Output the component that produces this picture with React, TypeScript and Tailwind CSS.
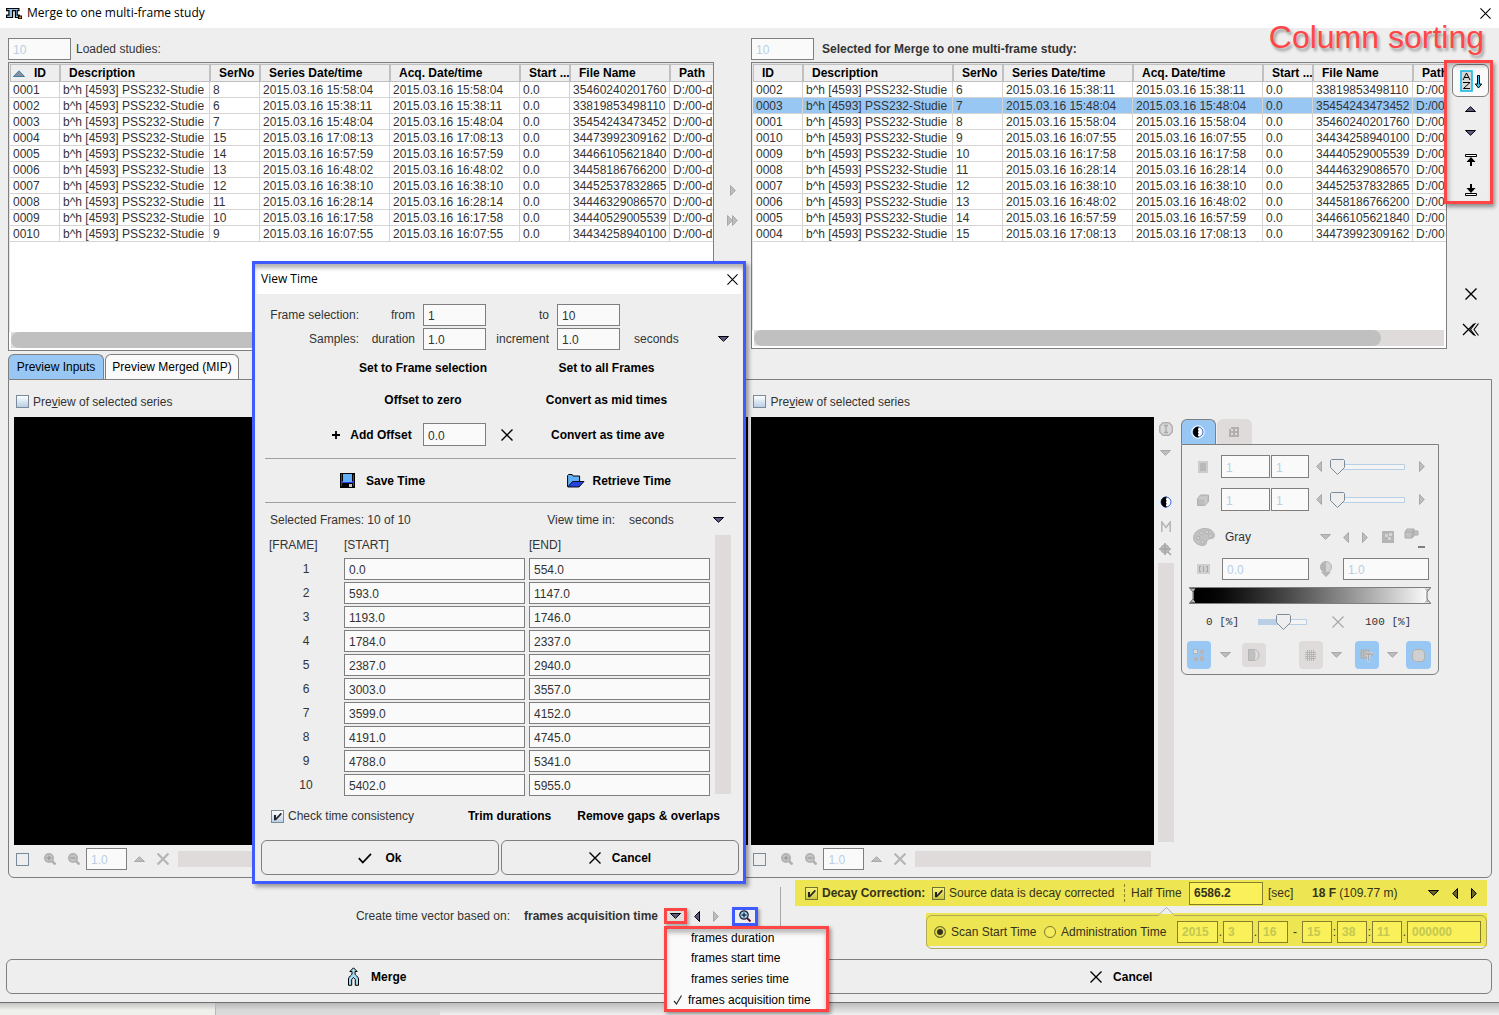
import React, { useState } from "react";
import type { ReactNode } from "react";

type Row = [string, string, string, string, string];

const loaded: Row[] = [
  ["0001", "8", "2015.03.16 15:58:04", "2015.03.16 15:58:04", "35460240201760"],
  ["0002", "6", "2015.03.16 15:38:11", "2015.03.16 15:38:11", "33819853498110"],
  ["0003", "7", "2015.03.16 15:48:04", "2015.03.16 15:48:04", "35454243473452"],
  ["0004", "15", "2015.03.16 17:08:13", "2015.03.16 17:08:13", "34473992309162"],
  ["0005", "14", "2015.03.16 16:57:59", "2015.03.16 16:57:59", "34466105621840"],
  ["0006", "13", "2015.03.16 16:48:02", "2015.03.16 16:48:02", "34458186766200"],
  ["0007", "12", "2015.03.16 16:38:10", "2015.03.16 16:38:10", "34452537832865"],
  ["0008", "11", "2015.03.16 16:28:14", "2015.03.16 16:28:14", "34446329086570"],
  ["0009", "10", "2015.03.16 16:17:58", "2015.03.16 16:17:58", "34440529005539"],
  ["0010", "9", "2015.03.16 16:07:55", "2015.03.16 16:07:55", "34434258940100"],
];
const mergeOrder = [1, 2, 0, 9, 8, 7, 6, 5, 4, 3];
const selected = mergeOrder.map((i) => loaded[i]);

const times: [string, string][] = [
  ["0.0", "554.0"],
  ["593.0", "1147.0"],
  ["1193.0", "1746.0"],
  ["1784.0", "2337.0"],
  ["2387.0", "2940.0"],
  ["3003.0", "3557.0"],
  ["3599.0", "4152.0"],
  ["4191.0", "4745.0"],
  ["4788.0", "5341.0"],
  ["5402.0", "5955.0"],
];

/* ---------- icons ---------- */

function Tri({ dir, muted = false, dark = "#5b5b86" }: { dir: "up" | "down" | "left" | "right"; muted?: boolean; dark?: string }) {
  const stroke = muted ? "#a9a9a9" : "#000";
  const fill = muted ? "#bdbdbd" : dark;
  const shapes = {
    up: ["11", "6", "0 0 11 6", "M.5 5.5h10L5.5.7z"],
    down: ["11", "6", "0 0 11 6", "M.5.5h10L5.5 5.3z"],
    left: ["6", "11", "0 0 6 11", "M5.5.5v10L.7 5.5z"],
    right: ["6", "11", "0 0 6 11", "M.5.5v10l4.8-5z"],
  } as const;
  const [w, h, vb, d] = shapes[dir];
  return (
    <svg width={w} height={h} viewBox={vb} className="shrink-0" aria-hidden="true">
      <path d={d} fill={fill} stroke={stroke} />
    </svg>
  );
}

function Cross({ size = 12, color = "#000", width = 1.4 }: { size?: number; color?: string; width?: number }) {
  return (
    <svg width={size} height={size} viewBox="0 0 12 12" className="shrink-0" aria-hidden="true">
      <path d="M.5.5l11 11M11.5.5l-11 11" stroke={color} strokeWidth={width} />
    </svg>
  );
}

function Lens({ plus, muted = true }: { plus: boolean; muted?: boolean }) {
  const s = muted ? "#b0b0b0" : "#1c1c3c";
  return (
    <svg width="12" height="12" viewBox="0 0 12 12" className="shrink-0" aria-hidden="true">
      <circle cx="5" cy="5" r="4.2" fill={muted ? "#c4c4c4" : "#9fd4f5"} stroke={s} strokeWidth={muted ? 1.6 : 1.2} />
      <path d={plus ? "M2.5 5h5M5 2.5v5" : "M2.5 5h5"} stroke={muted ? "#909090" : "#000"} strokeWidth="1" />
      <path d="M8 8l3.5 3.5" stroke={muted ? "#b0b0b0" : "#5a1440"} strokeWidth={muted ? 2.6 : 2} />
    </svg>
  );
}

function Contrast() {
  return (
    <svg width="14" height="14" viewBox="0 0 14 14" aria-hidden="true">
      <circle cx="7" cy="7" r="6.3" fill="#fff" stroke="#dfeeff" />
      <circle cx="7" cy="7" r="5" fill="#fff" stroke="#2f62c8" />
      <path d="M7.5 1.5a5.5 5.5 0 0 0 0 11v-1.5h-.5v-1.5h.5V8H7V6.500h.5V5H7V3.500h.5z" fill="#000" />
    </svg>
  );
}

function AppLogo() {
  return (
    <svg width="16" height="12" viewBox="0 0 16 12" aria-hidden="true">
      <path d="M.6 1.500h12.300v2.200h-1.700v4.500h2v2.300H9.400V3.700H6.600v6.800H.6V8.200h2.300V3.700H.6z" fill="#8cc0ec" stroke="#000" strokeWidth="1.200" />
      <path d="M12 8.500h4V12h-4z" fill="#000" />
      <path d="M13.200 9.500h2v1.800h-2z" fill="#f08a1c" />
    </svg>
  );
}

function MergeIcon() {
  return (
    <svg width="13" height="19" viewBox="0 0 13 19" aria-hidden="true">
      <path
        d="M6.500.8L10.200 4.500H8v2.500c0 1.200 3.500 2.500 3.500 5V18.300H8.300V12.500L6.500 10.500 4.700 12.500V18.300H1.500V12C1.500 9.500 5 8.200 5 7V4.500H2.800z"
        fill="#a5dbf2"
        stroke="#000"
      />
    </svg>
  );
}

function SortIcon() {
  return (
    <svg width="22" height="22" viewBox="0 0 22 22" aria-hidden="true">
      <rect x="1" y="1" width="11" height="20" fill="#d9d9d9" stroke="#18b8e6" strokeWidth="1.600" />
      <path d="M3 10l3.500-7L10 10M4.200 7.500h4.600" fill="none" stroke="#000" />
      <path d="M3 12.500h7L3.500 18.500H10" fill="none" stroke="#000" />
      <path d="M17.500 5.500h2V14h2.200L18.500 18l-3.200-4h2.200z" fill="#35c2ea" stroke="#000" />
    </svg>
  );
}

function MoveEdge({ bottom = false }: { bottom?: boolean }) {
  return (
    <svg width="12" height="12" viewBox="0 0 12 12" aria-hidden="true">
      {bottom ? (
        <>
          <path d="M.5 9.500h11v2H.5z" fill="#fff" stroke="#000" />
          <path d="M5 0h2v4h3.500L6 9 1.500 4H5z" fill="#000" />
        </>
      ) : (
        <>
          <path d="M.5.5h11v2H.5z" fill="#fff" stroke="#000" />
          <path d="M6 3l4.500 5H7v4H5V8H1.500z" fill="#000" />
        </>
      )}
    </svg>
  );
}

function RemoveAll() {
  return (
    <svg width="17" height="15" viewBox="0 0 17 15" aria-hidden="true">
      <path d="M1 2l11 11M12 2L1 13" stroke="#000" strokeWidth="1.300" />
      <path d="M13.500 1L8.500 7.500 13.500 14M16.500 1.500L12 7.500l4.500 6" fill="none" stroke="#000" strokeWidth="1.100" />
    </svg>
  );
}

function Floppy() {
  return (
    <svg width="15" height="15" viewBox="0 0 15 15" shapeRendering="crispEdges" aria-hidden="true">
      <path d="M0 0h15v15H0z" fill="#000" />
      <path d="M1 1h1v12H1zM13 2h1v11h-1zM2 8h11v2H2z" fill="#2443e0" />
      <path d="M3 1h9v8H3z" fill="#62b0f7" />
      <path d="M9 11h3v3H9z" fill="#c9c9c9" />
    </svg>
  );
}

function FolderIcon() {
  return (
    <svg width="18" height="14" viewBox="0 0 18 14" aria-hidden="true">
      <path d="M.6 12.800V1.500l1-1h3.500l1 1.500h6.500v5.500" fill="#62b0f7" stroke="#000" />
      <path d="M.8 13L5.500 7.500h11.500L12 13z" fill="#2443e0" stroke="#000" strokeWidth=".9" />
    </svg>
  );
}

function Tick({ size = 14 }: { size?: number }) {
  return (
    <svg width={size} height={size} viewBox="0 0 14 14" aria-hidden="true">
      <path d="M.8 7.200l4 4.300L13 2.800" fill="none" stroke="#000" strokeWidth="1.700" />
    </svg>
  );
}

function Palette() {
  return (
    <svg width="22" height="18" viewBox="0 0 22 18" aria-hidden="true">
      <path d="M11 .6C17 .1 21.400 3.500 21.400 7.500c0 3.500-3.400 2.500-6.400 4-2.500 1.300-.5 6-5 6C4.500 17.500.6 14 .6 10 .6 5 5 1 11 .6z" fill="#c2c2c2" stroke="#b2b2b2" />
      <g fill="#d0d0d0" stroke="#b2b2b2">
        <circle cx="5" cy="10" r="1.800" />
        <circle cx="8.500" cy="5" r="1.800" />
        <circle cx="14" cy="4" r="1.800" />
        <circle cx="17.500" cy="8" r="1.800" />
        <circle cx="9.500" cy="14" r="1.800" />
      </g>
    </svg>
  );
}

const G = "#b5b5b5";

function SliceIcon() {
  return (
    <svg width="10" height="12" viewBox="0 0 10 12" aria-hidden="true">
      <path d="M1 1h8v10H1z" fill="#b8b8b8" stroke="#cccccc" strokeWidth="2" />
    </svg>
  );
}

function CubeIcon() {
  return (
    <svg width="12" height="12" viewBox="0 0 12 12" aria-hidden="true">
      <path d="M.5 4.500l3-3.500h8v6.500L8 11.500H.5z" fill="#bdbdbd" stroke="#b0b0b0" />
      <path d="M1 4.500H8v6.500M8 4.500L11 1.500M2.500 3h7v6" fill="none" stroke="#cfcfcf" />
    </svg>
  );
}

function GridIcon({ n = 2 }: { n?: number }) {
  return n === 2 ? (
    <svg width="10" height="10" viewBox="0 0 10 10" shapeRendering="crispEdges" aria-hidden="true">
      <path d="M2 0h8v10H0V2h2z" fill="#b0b0b0" />
      <path d="M2 2h2v2H2zM6 2h2v2H6zM2 6h2v2H2zM6 6h2v2H6z" fill="#dfdbdb" />
    </svg>
  ) : (
    <svg width="11" height="11" viewBox="0 0 11 11" shapeRendering="crispEdges" aria-hidden="true">
      <path d="M0 2.500h11M0 4.500h11M0 6.500h11M0 8.500h11M2.500 0v11M4.500 0v11M6.500 0v11M8.500 0v11" stroke={G} />
    </svg>
  );
}

/* ---------- controls ---------- */

function Field({ value, label, className, disabled = false }: { value: string; label: string; className: string; disabled?: boolean }) {
  return (
    <input
      type="text"
      aria-label={label}
      defaultValue={value}
      disabled={disabled}
      className={`min-w-0 border border-[#7f7f7f] bg-[#fafafa] pt-[2px] pl-[4px] disabled:text-[#b8cfe5] ${className}`}
    />
  );
}

function Check({ checked = false, yellow = false, flat = false, label, children }: { checked?: boolean; yellow?: boolean; flat?: boolean; label?: string; children?: ReactNode }) {
  const [on, setOn] = useState(checked);
  const skin = yellow
    ? "border-[#6f7330] bg-linear-to-b from-[#faf27a] to-[#c9c63c]"
    : flat
      ? "border-[#7a8a99] bg-[#eeeeee]"
      : "border-[#7a8a99] bg-linear-to-b from-white to-[#b8cfe5]";
  return (
    <label className="flex shrink-0 items-center gap-[4px] whitespace-nowrap">
      <span className="relative block size-[13px]">
        <input type="checkbox" aria-label={label} checked={on} onChange={() => setOn(!on)} className={`block size-[13px] appearance-none border ${skin}`} />
        {on && (
          <svg width="13" height="13" viewBox="0 0 13 13" className="pointer-events-none absolute inset-0" aria-hidden="true">
            <path d="M3 5h2v3L9.500 3h1v1.500L5 10.200H3z" fill="#222" />
          </svg>
        )}
      </span>
      {children && <span>{children}</span>}
    </label>
  );
}

function Select({ options, label, className, muted = false }: { options: string[]; label: string; className: string; muted?: boolean }) {
  return (
    <span className={`relative flex items-center ${className}`}>
      <select aria-label={label} className="w-full appearance-none bg-transparent">
        {options.map((o) => (
          <option key={o}>{o}</option>
        ))}
      </select>
      <span className="pointer-events-none absolute right-0">
        <Tri dir="down" muted={muted} />
      </span>
    </span>
  );
}

function Flat({ label, children, className = "" }: { label?: string; children: ReactNode; className?: string }) {
  return (
    <button type="button" aria-label={label} className={`flex shrink-0 items-center justify-center ${className}`}>
      {children}
    </button>
  );
}

/* ---------- study tables ---------- */

const heads = ["ID", "Description", "SerNo", "Series Date/time", "Acq. Date/time", "Start ...", "File Name", "Path"];

function StudyTable({ rows, sorted = false, highlight = -1, thumb, path }: { rows: Row[]; sorted?: boolean; highlight?: number; thumb: string; path: string }) {
  return (
    <div className={`flex flex-col overflow-hidden border border-[#7f7f7f] bg-white ${sorted ? "h-[289px]" : "h-[287px]"}`}>
      <div className="min-h-0 flex-1 overflow-hidden border-t border-l border-[#e4e4e4]">
        <table className="w-full table-fixed border-separate border-spacing-0 whitespace-nowrap">
          <colgroup>
            <col className="w-[50px]" />
            <col className="w-[150px]" />
            <col className="w-[50px]" />
            <col className="w-[130px]" />
            <col className="w-[130px]" />
            <col className="w-[50px]" />
            <col className="w-[100px]" />
            <col />
          </colgroup>
          <thead>
            <tr>
              {heads.map((h, i) => (
                <th key={h} className="h-[18px] border-t border-r border-b border-l border-[#c0c0c0] bg-[#eeeeee] p-0 pt-px pl-[8px] text-left leading-[15px] font-bold text-black last:border-r-0">
                  {i === 0 && sorted ? (
                    <span className="-ml-[6px] flex items-center gap-[9px]">
                      <svg width="12" height="7" viewBox="0 0 12 7" aria-hidden="true">
                        <path d="M.5 6.500h11L6 .8z" fill="#8a8f9c" stroke="#3d7ea6" />
                      </svg>
                      {h}
                    </span>
                  ) : (
                    h
                  )}
                </th>
              ))}
            </tr>
          </thead>
          <tbody>
            {rows.map((r, i) => (
              <tr key={r[0]} className={i === highlight ? "bg-[#99c7f4]" : ""}>
                {[r[0], "b^h [4593] PSS232-Studie", r[1], r[2], r[3], "0.0", r[4], path].map((c, j) => (
                  <td key={j} className="h-[16px] border-r border-b border-[#d6d3d3] p-0 pt-px pl-[3px] leading-[14px] last:border-r-0">
                    {c}
                  </td>
                ))}
              </tr>
            ))}
          </tbody>
        </table>
      </div>
      <div className="mx-[2px] mb-[2px] h-[16px] shrink-0 bg-[#dfdbdb]">
        <div className={`h-full rounded-full bg-[#c0c0c0] ${thumb}`} />
      </div>
    </div>
  );
}

/* ---------- preview area ---------- */

function PreviewPane({ id }: { id: string }) {
  return (
    <div className="flex min-w-0 flex-1 flex-col">
      <div className="flex h-[37px] shrink-0 items-center pt-[6px] pl-[2px]">
        <Check>
          Pre<u>v</u>iew of selected series
        </Check>
      </div>
      <div className="flex-1 bg-black" />
      <div className="flex h-[32px] shrink-0 items-start pt-[3px]">
        <div className="flex h-[22px] w-full items-center">
          <div className="ml-[2px]">
            <Check flat label={`${id} link`} />
          </div>
          <Flat label="Zoom in" className="ml-[15px]"><Lens plus /></Flat>
          <Flat label="Zoom out" className="ml-[12px]"><Lens plus={false} /></Flat>
          <Field label={`${id} zoom`} value="1.0" disabled className="ml-[6px] h-[22px] w-[41px] shrink-0" />
          <Flat label="Increase zoom" className="ml-[6px] w-[12px]"><Tri dir="up" muted /></Flat>
          <Flat label="Reset zoom" className="ml-[12px]"><Cross color="#b5b5b5" width={2.2} /></Flat>
          <div className="mr-[3px] ml-[9px] h-[16px] flex-1 bg-[#dfdbdb]" />
        </div>
      </div>
    </div>
  );
}

function SideTools() {
  return (
    <div className="flex w-[27px] shrink-0 flex-col pt-[37px] pr-[7px] pl-[4px]">
      <Flat label="Info" className="h-[24px]">
        <svg width="14" height="14" viewBox="0 0 14 14" className="shrink-0" aria-hidden="true">
          <path d="M4 .8h6L13.200 4v6L10 13.200H4L.8 10V4z" fill="#d9d9d9" stroke="#b0b0b0" strokeWidth="1.500" />
          <path d="M5 3.500h4M5 10.500h4M7 3.500v7" stroke="#a8a8a8" strokeWidth="1.300" />
        </svg>
      </Flat>
      <Flat label="More" className="h-[24px]"><Tri dir="down" muted /></Flat>
      <Flat label="Contrast" className="mt-[25px] h-[24px]"><Contrast /></Flat>
      <Flat label="Markers" className="h-[24px]">
        <svg width="10" height="11" viewBox="0 0 10 11" aria-hidden="true">
          <path d="M.8 11V1l4.200 5.500L9.200 1v10" fill="none" stroke="#b5b5b5" strokeWidth="1.500" />
        </svg>
      </Flat>
      <Flat label="Target" className="h-[22px]">
        <svg width="13" height="13" viewBox="0 0 13 13" aria-hidden="true">
          <circle cx="6" cy="6" r="4.300" fill="#b8b8b8" stroke="#b0b0b0" />
          <path d="M6 0v12M0 6h12M9 9l3 3" stroke="#a8a8a8" strokeWidth="1.600" />
        </svg>
      </Flat>
      <div className="mt-[3px] mb-[35px] w-[16px] flex-1 bg-[#dfdbdb]" />
    </div>
  );
}

function SliceRow({ icon, label }: { icon: ReactNode; label: string }) {
  return (
    <div className="flex h-[23px] items-center">
      <div className="flex w-[39px] shrink-0 justify-center pl-[4px]">{icon}</div>
      <Field label={`${label} from`} value="1" disabled className="h-[23px] w-[49px] shrink-0" />
      <Field label={`${label} to`} value="1" disabled className="ml-px h-[23px] w-[38px] shrink-0" />
      <Flat label={`Previous ${label}`} className="w-[21px]"><Tri dir="left" muted /></Flat>
      <div className="relative h-[16px] w-[75px] shrink-0">
        <svg width="75" height="16" viewBox="0 0 75 16" aria-hidden="true">
          <path d="M8 5.500h66.500v5H8z" fill="#f4f4f4" stroke="#b8cfe5" />
          <path d="M.5 1.500l1-1h12l1 1V8.500l-7 7-7-7z" fill="#eee" stroke="#7a8a99" />
        </svg>
        <input type="range" aria-label={label} min={1} max={10} defaultValue={1} className="absolute inset-0 w-full opacity-0" />
      </div>
      <Flat label={`Next ${label}`} className="ml-[2px] w-[31px]"><Tri dir="right" muted /></Flat>
    </div>
  );
}

function ColorControls() {
  return (
    <div className="w-[258px] shrink-0 pt-[39px]">
      <div className="flex items-end gap-px">
        <Flat label="Color tab" className="h-[25px] w-[35px] rounded-t-md border border-b-0 border-[#7f7f7f] bg-[#99c7f4]"><Contrast /></Flat>
        <Flat label="Layout tab" className="h-[25px] w-[35px] rounded-t-md bg-[#dfdbdb]"><GridIcon /></Flat>
      </div>
      <div className="rounded-b-md border border-[#7f7f7f] pt-[10px] pb-[5px]">
        <SliceRow label="slice" icon={<SliceIcon />} />
        <div className="h-[10px]" />
        <SliceRow label="volume" icon={<CubeIcon />} />
        <div className="mt-[14px] flex h-[24px] items-center pl-[11px]">
          <Palette />
          <Select label="Color table" options={["Gray", "Hot", "Rainbow"]} muted className="ml-[10px] w-[106px]" />
          <Flat label="Previous color table" className="ml-[5px] w-[20px]"><Tri dir="left" muted /></Flat>
          <Flat label="Next color table" className="w-[18px]"><Tri dir="right" muted /></Flat>
          <Flat label="Invert" className="w-[28px]">
            <svg width="12" height="12" viewBox="0 0 12 12" shapeRendering="crispEdges" aria-hidden="true">
              <path d="M0 0h12v12H0z" fill="#b5b5b5" />
              <path d="M3 3h3v3H3zM6 6h3v3H6zM7 2h3v3H7z" fill="#d4d4d4" />
            </svg>
          </Flat>
          <Flat label="Link volumes" className="w-[27px]">
            <svg width="22" height="22" viewBox="0 0 22 22" className="shrink-0" aria-hidden="true">
              <path d="M1 6l2-3h7v7l-2 2H1zM10 5h4v4h-4z" fill="#c2c2c2" stroke="#aaa" />
              <path d="M1 6h7v6M8 6l2-3" fill="none" stroke="#aaa" />
              <path d="M14 20h7v2h-7z" fill="#7f7f7f" />
            </svg>
          </Flat>
        </div>
        <div className="mt-[9px] flex h-[22px] items-center">
          <div className="flex w-[40px] shrink-0 justify-center pl-[4px]">
            <svg width="13" height="10" viewBox="0 0 13 10" shapeRendering="crispEdges" aria-hidden="true">
              <path d="M0 0h13v10H0z" fill="#cfcfcf" />
              <path d="M2.500 2v6M6.500 2v6M10.500 2v6M2 2.500h2M2 7.500h2M9 2.500h2M9 7.500h2" stroke="#a8a8a8" />
            </svg>
          </div>
          <Field label="Lower limit" value="0.0" disabled className="h-[22px] w-[87px] shrink-0" />
          <div className="flex w-[34px] justify-center">
            <svg width="14" height="16" viewBox="0 0 14 16" aria-hidden="true">
              <circle cx="7" cy="6" r="5.500" fill="#d4d4d4" stroke="#b5b5b5" />
              <path d="M7 .5a5.500 5.500 0 0 0 0 11zM2 11h10l-5 5z" fill="#b5b5b5" />
            </svg>
          </div>
          <Field label="Upper limit" value="1.0" disabled className="h-[22px] w-[86px] shrink-0" />
        </div>
        <div className="mx-[7px] mt-[7px] flex h-[17px] justify-between border-y border-[#7f7f7f] bg-linear-to-r from-black to-white">
          <svg width="7" height="15" viewBox="0 0 7 15" aria-hidden="true">
            <path d="M0 0h1l3.500 4v7L1 15H0z" fill="#eee" />
            <path d="M1 .5h5.500L4 4zM1 14.500h5.500L4 11z" fill="#bbb" />
            <path d="M.5 0l3.500 4v7L.5 15" fill="none" stroke="#6f6f6f" />
          </svg>
          <svg width="7" height="15" viewBox="0 0 7 15" aria-hidden="true">
            <path d="M7 0H6L2.500 4v7L6 15h1z" fill="#eee" />
            <path d="M6 .5H.5L3 4zM6 14.500H.5L3 11z" fill="#bbb" />
            <path d="M6.500 0L3 4v7l3.500 4" fill="none" stroke="#6f6f6f" />
          </svg>
        </div>
        <div className="mt-[8px] flex h-[20px] items-center pl-[24px] font-['Liberation_Mono',monospace] text-[11px]">
          <span className="w-[52px] whitespace-pre">0 [%]</span>
          <div className="relative h-[16px] w-[49px]">
            <svg width="49" height="16" viewBox="0 0 49 16" aria-hidden="true">
              <path d="M25 5.500h23.500v5H25z" fill="#f4f4f4" stroke="#b8cfe5" />
              <path d="M0 5h25v6H0z" fill="#b8cfe5" />
              <path d="M18.500 1.500l1-1h12l1 1V8.500l-7 7-7-7z" fill="#eee" stroke="#7a8a99" />
            </svg>
            <input type="range" aria-label="Window center" defaultValue={50} className="absolute inset-0 w-full opacity-0" />
          </div>
          <Flat label="Reset window" className="w-[58px] pl-[4px]"><Cross color="#a8a8a8" width={1.2} /></Flat>
          <span>100 [%]</span>
        </div>
        <div className="mt-[9px] flex h-[28px] items-center pl-[5px]">
          <Flat label="Nodes" className="h-[28px] w-[24px] rounded bg-[#99c7f4]">
            <svg width="11" height="12" viewBox="0 0 11 12" aria-hidden="true">
              <path d="M.5.5h4v4h-4z" fill="#ddd" stroke="#b0b0b0" />
              <path d="M7 1h4v3.500H7zM1 8h4v4H1zM7 8h4v4H7z" fill={G} />
              <path d="M4 4l4 4M9 4v4" stroke={G} />
            </svg>
          </Flat>
          <Flat label="Node options" className="w-[31px] pr-[2px]"><Tri dir="down" muted /></Flat>
          <Flat label="Threshold" className="h-[24px] w-[24px] rounded bg-[#dfdbdb]">
            <svg width="12" height="12" viewBox="0 0 12 12" aria-hidden="true">
              <path d="M.5.5H6c3 0 5 2.500 5 5.500s-2 5.500-5 5.500H.5z" fill="#dedede" stroke={G} />
              <path d="M.5.500H5c2.500 2 2.500 9 0 11H.5z" fill="#c0c0c0" stroke={G} />
            </svg>
          </Flat>
          <Flat label="Grid" className="ml-[33px] h-[28px] w-[24px] rounded bg-[#dfdbdb]"><GridIcon n={3} /></Flat>
          <Flat label="Grid options" className="w-[32px] pr-[4px]"><Tri dir="down" muted /></Flat>
          <Flat label="Annotations" className="h-[28px] w-[24px] rounded bg-[#99c7f4]">
            <svg width="13" height="13" viewBox="0 0 13 13" aria-hidden="true">
              <path d="M1 1h8v8H1z" fill="#c4c4c4" stroke="#a8a8a8" />
              <path d="M1 3.500h8M1 6h8M3.500 1v8M6 1v8" stroke="#a8a8a8" strokeWidth=".8" />
              <path d="M5 5h7.500v2M8.500 5v7.500" fill="none" stroke="#dcdcdc" strokeWidth="3" />
              <path d="M5 5h7v2M8.500 5v7" fill="none" stroke="#a8a8a8" strokeWidth="1.500" />
            </svg>
          </Flat>
          <Flat label="Annotation options" className="w-[27px]"><Tri dir="down" muted /></Flat>
          <Flat label="Outline" className="h-[28px] w-[25px] rounded bg-[#99c7f4]">
            <span className="block size-[13px] rounded border border-[#b0b0b0] bg-[#d0d0d0]" />
          </Flat>
        </div>
      </div>
    </div>
  );
}

/* ---------- view time dialog ---------- */

function ViewTimeDialog() {
  return (
    <div
      role="dialog"
      aria-label="View Time"
      className="absolute top-[261px] left-[252px] z-20 w-[494px] border-3 border-[#3f5bff] bg-[#eeeeee] shadow-[3px_3px_4px_rgba(0,0,0,0.35)]"
    >
      <div className="flex h-[30px] items-center justify-between bg-white pr-[5px] pl-[6px] font-['Open_Sans',sans-serif] text-black shadow-[inset_0_5px_4px_-1px_rgba(0,0,0,0.3)]">
        <span>View Time</span>
        <Flat label="Close dialog"><Cross size={11} width={1.2} /></Flat>
      </div>

      <div className="mt-[10px] grid grid-cols-[104px_56px_71px_63px_71px_1fr] items-center gap-y-[2px] pr-[14px] text-right">
        <span>Frame selection:</span>
        <span>from</span>
        <Field label="Frame from" value="1" className="ml-[8px] h-[22px]" />
        <span>to</span>
        <Field label="Frame to" value="10" className="ml-[8px] h-[22px]" />
        <span />
        <span>Samples:</span>
        <span>duration</span>
        <Field label="Sample duration" value="1.0" className="ml-[8px] h-[22px]" />
        <span>increment</span>
        <Field label="Sample increment" value="1.0" className="ml-[8px] h-[22px]" />
        <Select label="Sample unit" options={["seconds", "minutes"]} className="ml-[14px]" />
      </div>

      <div className="mt-[8px] grid grid-cols-2 gap-y-[12px] font-bold text-black">
        <Flat className="h-[20px] pl-[92px]">Set to Frame selection</Flat>
        <Flat className="h-[20px] pr-[29px]">Set to all Frames</Flat>
        <Flat className="h-[20px] pl-[92px]">Offset to zero</Flat>
        <Flat className="h-[20px] pr-[29px]">Convert as mid times</Flat>
      </div>
      <div className="mt-[13px] flex h-[23px] items-center font-bold text-black">
        <Flat className="ml-[78px] w-[78px] gap-[10px]">
          <svg width="8" height="8" viewBox="0 0 8 8" className="shrink-0" aria-hidden="true">
            <path d="M4 0v8M0 4h8" stroke="#000" strokeWidth="1.800" />
          </svg>
          <span className="whitespace-nowrap">Add Offset</span>
        </Flat>
        <Field label="Offset" value="0.0" className="ml-[12px] h-[23px] w-[63px] font-normal text-[#333333]" />
        <Flat label="Clear offset" className="ml-[15px]"><Cross /></Flat>
        <Flat className="ml-[38px]">Convert as time ave</Flat>
      </div>

      <hr className="mt-[12px] mr-[7px] ml-[10px] border-[#a0a0a0]" />
      <div className="flex h-[43px] items-center font-bold text-black">
        <Flat className="ml-[85px] gap-[11px]"><Floppy />Save Time</Flat>
        <Flat className="mr-[72px] ml-auto gap-[8px]"><FolderIcon />Retrieve Time</Flat>
      </div>
      <hr className="mr-[7px] ml-[10px] border-[#a0a0a0]" />

      <div className="mt-[7px] flex h-[20px] items-center pr-[19px] pl-[15px]">
        <span>Selected Frames: 10 of 10</span>
        <span className="mr-[14px] ml-auto">View time in:</span>
        <Select label="View time unit" options={["seconds", "minutes"]} className="w-[95px]" />
      </div>

      <div className="mt-[5px] flex pr-[12px]">
        <table className="w-[456px] table-fixed border-separate border-spacing-0">
          <thead>
            <tr className="text-left">
              <th className="h-[22px] w-[89px] p-0 pb-[2px] pl-[14px] font-normal">[FRAME]</th>
              <th className="w-[185px] p-0 pb-[2px] font-normal">[START]</th>
              <th className="p-0 pb-[2px] font-normal">[END]</th>
            </tr>
          </thead>
          <tbody>
            {times.map(([s, e], i) => (
              <tr key={s}>
                <td className="h-[24px] p-0 pl-[13px] text-center">{i + 1}</td>
                <td className="p-0">
                  <Field label={`Start of frame ${i + 1}`} value={s} className="block h-[22px] w-[181px]" />
                </td>
                <td className="p-0">
                  <Field label={`End of frame ${i + 1}`} value={e} className="block h-[22px] w-[181px]" />
                </td>
              </tr>
            ))}
          </tbody>
        </table>
        <div className="mb-[3px] ml-auto w-[16px] bg-[#dfdbdb]" />
      </div>

      <div className="mt-[8px] flex h-[22px] items-center pr-[23px] pl-[16px]">
        <Check checked>Check time consistency</Check>
        <Flat className="ml-auto font-bold text-black">Trim durations</Flat>
        <Flat className="ml-[26px] font-bold text-black">Remove gaps &amp; overlaps</Flat>
      </div>

      <div className="mt-[13px] mb-[6px] grid grid-cols-2 gap-[2px] pr-[4px] pl-[6px] font-bold text-black">
        <Flat className="h-[35px] gap-[13px] rounded-md border border-[#7f7f7f]"><Tick />Ok</Flat>
        <Flat className="h-[35px] gap-[11px] rounded-md border border-[#7f7f7f]"><Cross />Cancel</Flat>
      </div>
    </div>
  );
}

/* ---------- bottom options ---------- */

const vectorOptions = ["frames duration", "frames start time", "frames series time", "frames acquisition time"];

function TimeVector() {
  return (
    <div className="mt-[9px] flex h-[58px] items-center justify-end border-r border-[#a8a8a8] pr-[22px]">
      <span className="mr-[14px]">Create time vector based on:</span>
      <span className="w-[140px] font-bold whitespace-nowrap">frames acquisition time</span>
      <div className="relative">
        <button type="button" aria-label="Choose time vector" aria-haspopup="listbox" className="flex h-[16px] w-[23px] items-center justify-center border-3 border-[#ff4646] bg-[#dedede] shadow-[2px_2px_3px_rgba(0,0,0,0.3)]">
          <Tri dir="down" />
        </button>
        <ul role="listbox" aria-label="Time vector" className="absolute top-[18px] left-0 z-30 h-[86px] w-[165px] border-3 border-[#ff4646] bg-[#fafafa] text-black shadow-[2px_2px_4px_rgba(0,0,0,0.4),inset_0_4px_4px_rgba(0,0,0,0.25)]">
          {vectorOptions.map((o, i) => (
            <li key={o} role="option" aria-selected={i === 3} className="flex h-[21px] items-center whitespace-nowrap first:h-[18px]">
              {i === 3 ? (
                <span className="flex items-center gap-[5px] pl-[6px]">
                  <svg width="10" height="10" viewBox="0 0 10 10" aria-hidden="true">
                    <path d="M1 6l2.500 3L8.500.5" fill="none" stroke="#333" strokeWidth="1.200" />
                  </svg>
                  {o}
                </span>
              ) : (
                <span className="pl-[24px]">{o}</span>
              )}
            </li>
          ))}
        </ul>
      </div>
      <Flat label="Previous" className="ml-[7px]"><Tri dir="left" /></Flat>
      <Flat label="Next" className="ml-[13px]"><Tri dir="right" muted /></Flat>
      <Flat label="View time details" className="ml-[13px] h-[19px] w-[26px] border-3 border-[#3f5bff] shadow-[2px_2px_3px_rgba(0,0,0,0.3)]"><Lens plus muted={false} /></Flat>
    </div>
  );
}

function DateField({ value, label, className }: { value: string; label: string; className: string }) {
  return (
    <input
      type="text"
      disabled
      aria-label={label}
      defaultValue={value}
      className={`h-[22px] min-w-0 shrink-0 border border-[#857f2c] bg-[#f9f05a] pl-[4px] font-bold text-[#c3c851] ${className}`}
    />
  );
}

function Radio({ checked = false, children }: { checked?: boolean; children: ReactNode }) {
  return (
    <label className="flex shrink-0 items-center gap-[5px] whitespace-nowrap">
      <input
        type="radio"
        name="origin"
        defaultChecked={checked}
        className="size-[12px] appearance-none rounded-full border border-[#7d7a2c] bg-[#f4ec5c] checked:bg-[#35331a] checked:shadow-[inset_0_0_0_2px_#e2da50]"
      />
      {children}
    </label>
  );
}

function DecayCorrection() {
  return (
    <div className="flex flex-col items-end pt-[2px] pr-[12px] pl-[14px] text-[#35331a]">
      <div className="flex h-[26px] w-full items-center bg-[#ede552] pl-[10px]">
        <div className="w-[127px] shrink-0 font-bold"><Check checked yellow>Decay Correction:</Check></div>
        <div className="w-[192px] shrink-0"><Check checked yellow>Source data is decay corrected</Check></div>
        <label htmlFor="half-time" className="flex h-[18px] w-[65px] shrink-0 items-center border-l border-dashed border-[#857f2c] pl-[6px]">Half Time</label>
        <input id="half-time" type="text" defaultValue="6586.2" className="h-[23px] w-[74px] min-w-0 shrink-0 border border-[#857f2c] bg-[#f9f05a] pl-[4px] font-bold" />
        <span className="ml-[5px]">[sec]</span>
        <Flat label="Isotope 18 F (109.77 m)" className="ml-auto w-[127px]">
          <span className="flex w-full items-center justify-between">
            <span className="whitespace-nowrap"><b>18 F</b> (109.77 m)</span>
            <Tri dir="down" dark="#6b6626" />
          </span>
        </Flat>
        <Flat label="Previous isotope" className="ml-[13px]"><Tri dir="left" dark="#6b6626" /></Flat>
        <Flat label="Next isotope" className="mr-[10px] ml-[13px]"><Tri dir="right" dark="#6b6626" /></Flat>
      </div>
      <div className="relative mt-[7px] h-[33px] w-[561px] bg-[#ede552] pt-[2px]">
        <svg width="17" height="10" viewBox="0 0 17 10" className="absolute -top-[6px] left-[232px]" aria-hidden="true">
          <path d="M0 8.500L8.500.5l8 8" fill="#eeeeee" stroke="#b0b0a0" />
          <path d="M2 7h13l2 3H0z" fill="#ede552" />
        </svg>
        <div className="flex h-[34px] items-center rounded-md border border-[#b0a95c] pl-[7px]">
          <div className="w-[110px] shrink-0"><Radio checked>Scan Start Time</Radio></div>
          <div className="w-[133px] shrink-0"><Radio>Administration Time</Radio></div>
          <DateField label="Year" value="2015" className="w-[41px]" />
          <span className="w-[5px] shrink-0 text-center">.</span>
          <DateField label="Month" value="3" className="w-[30px]" />
          <span className="w-[5px] shrink-0 text-center">.</span>
          <DateField label="Day" value="16" className="w-[30px]" />
          <span className="w-[14px] shrink-0 text-center">-</span>
          <DateField label="Hour" value="15" className="w-[30px]" />
          <span className="w-[5px] shrink-0 text-center">:</span>
          <DateField label="Minute" value="38" className="w-[30px]" />
          <span className="w-[5px] shrink-0 text-center">:</span>
          <DateField label="Second" value="11" className="w-[30px]" />
          <span className="w-[5px] shrink-0 text-center">.</span>
          <DateField label="Fraction" value="000000" className="w-[74px]" />
        </div>
      </div>
    </div>
  );
}

/* ---------- window ---------- */

export default function App() {
  return (
    <div className="relative flex h-screen flex-col overflow-hidden bg-[#eeeeee] font-['Liberation_Sans',Arial,sans-serif] text-xs text-[#333333]">
      <header className="flex h-[28px] shrink-0 items-center bg-white pr-[8px] pb-[2px] pl-[6px] font-['Open_Sans',sans-serif] text-black">
        <AppLogo />
        <h1 className="ml-[5px] flex-1">Merge to one multi-frame study</h1>
        <Flat label="Close window"><Cross size={11} width={1.2} /></Flat>
      </header>

      <section className="grid h-[326px] shrink-0 grid-cols-[706fr_37px_696fr_52px] pl-[8px]">
        <div className="min-w-0 pt-[10px]">
          <div className="mb-[2px] flex h-[22px] items-center">
            <Field label="Loaded studies" value="10" disabled className="h-[22px] w-[63px]" />
            <span className="ml-[5px]">Loaded studies:</span>
          </div>
          <StudyTable rows={loaded} sorted thumb="w-11/12" path="D:/00-d" />
        </div>
        <div className="flex flex-col items-center pt-[147px]">
          <Flat label="Add selected" className="h-[30px]"><Tri dir="right" muted /></Flat>
          <Flat label="Add all" className="h-[31px] -space-x-px"><Tri dir="right" muted /><Tri dir="right" muted /></Flat>
        </div>
        <div className="min-w-0 pt-[10px]">
          <div className="mb-[2px] flex h-[22px] items-center">
            <Field label="Selected studies" value="10" disabled className="h-[22px] w-[63px]" />
            <span className="ml-[8px] font-bold">Selected for Merge to one multi-frame study:</span>
          </div>
          <StudyTable rows={selected} highlight={1} thumb="w-10/11" path="D:/00" />
        </div>
        <div className="relative flex flex-col items-center pt-[36px] pr-[5px]">
          <span className="pointer-events-none absolute -top-[9px] right-[15px] text-[32px] leading-9 whitespace-nowrap text-[#ff4646] [text-shadow:2px_3px_3px_rgba(0,0,0,0.35)]">
            Column sorting
          </span>
          <div className="pointer-events-none absolute top-[32px] -left-[3px] z-10 h-[144px] w-[49px] border-3 border-[#ff4646] shadow-[2px_3px_4px_rgba(0,0,0,0.4),inset_2px_3px_4px_rgba(0,0,0,0.25)]" />
          <Flat label="Sort columns" className="h-[33px] w-[37px] rounded-md border border-[#7f7f7f] bg-[#fafafa]"><SortIcon /></Flat>
          <Flat label="Move up" className="h-[24px]"><Tri dir="up" /></Flat>
          <Flat label="Move down" className="h-[24px]"><Tri dir="down" /></Flat>
          <Flat label="Move to top" className="h-[30px]"><MoveEdge /></Flat>
          <Flat label="Move to bottom" className="h-[30px]"><MoveEdge bottom /></Flat>
          <Flat label="Remove" className="mt-[74px] h-[30px]"><Cross /></Flat>
          <Flat label="Remove all" className="mt-[5px] h-[30px]"><RemoveAll /></Flat>
        </div>
      </section>

      <div role="tablist" className="flex h-[25px] shrink-0 items-stretch gap-px pl-[8px] text-black">
        <button type="button" role="tab" aria-selected="true" className="w-[96px] rounded-t-md border border-b-0 border-[#7f7f7f] bg-[#99c7f4]">Preview Inputs</button>
        <button type="button" role="tab" aria-selected="false" className="w-[134px] rounded-t-md border border-b-0 border-[#7f7f7f] bg-[#fafafa]">Preview Merged (MIP)</button>
      </div>
      <section className="mr-[7px] ml-[8px] grid min-h-0 flex-1 grid-cols-[737fr_739fr] rounded-b-md border border-[#7f7f7f] pl-[5px]">
        <div className="flex min-w-0 pr-[3px]">
          <PreviewPane id="Input" />
        </div>
        <div className="flex min-w-0 pr-[52px]">
          <PreviewPane id="Selection" />
          <SideTools />
          <ColorControls />
        </div>
      </section>

      <section className="grid h-[81px] shrink-0 grid-cols-[781fr_718fr]">
        <TimeVector />
        <DecayCorrection />
      </section>

      <div className="mr-[7px] mb-[8px] ml-[6px] grid shrink-0 grid-cols-2 gap-[3px] font-bold text-black">
        <Flat className="h-[35px] gap-[11px] rounded-md border border-[#7f7f7f]"><MergeIcon />Merge</Flat>
        <Flat className="h-[35px] gap-[11px] rounded-md border border-[#7f7f7f]"><Cross />Cancel</Flat>
      </div>
      <div className="flex h-[13px] shrink-0 border-t border-[#6f6f6f]">
        <div className="w-[215px] bg-linear-to-b from-[#c4c4c2] to-[#efefec] to-60%" />
        <div className="w-[225px] border-l border-[#b8b8b8] bg-linear-to-b from-[#b8b8b8] to-[#dadada] to-60%" />
        <div className="flex-1 bg-linear-to-b from-[#bebebe] to-[#f0f0f0]" />
      </div>

      <ViewTimeDialog />
    </div>
  );
}
